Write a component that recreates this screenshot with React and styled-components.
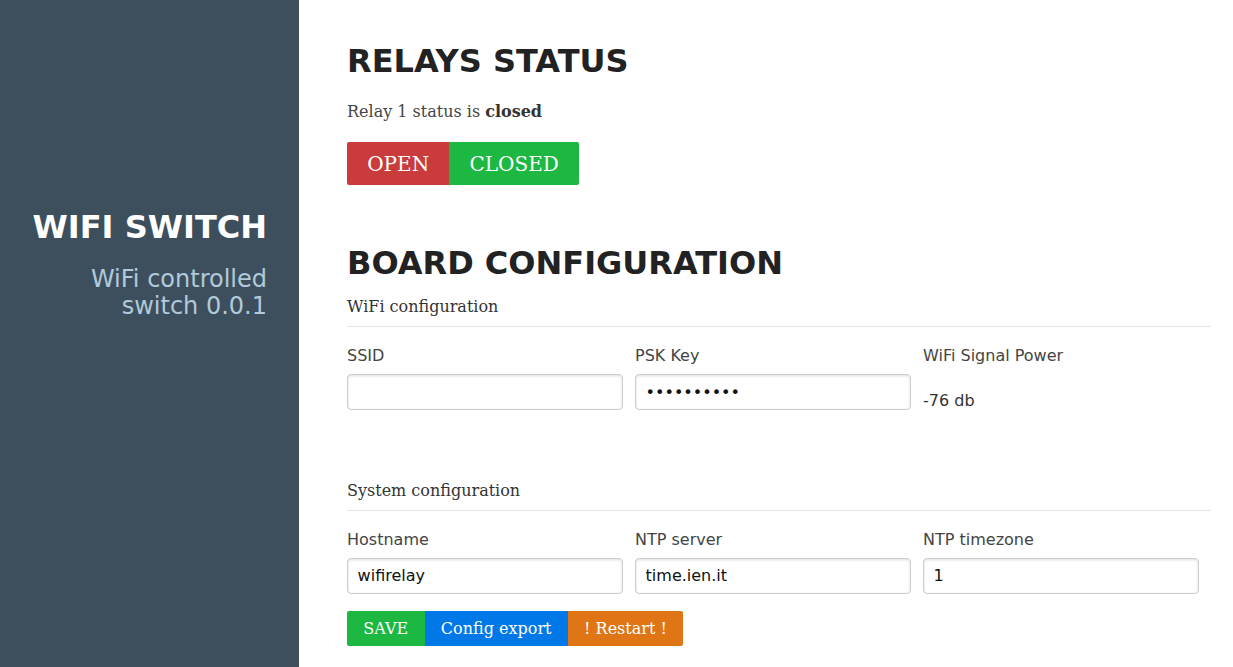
import React from "react";
import styled, { createGlobalStyle } from "styled-components";

const Global = createGlobalStyle`
  html, body { margin: 0; padding: 0; background: #fff; }
  body { font-family: "DejaVu Serif", serif; color: #444; }
  * { box-sizing: border-box; }
`;

const Layout = styled.div`
  display: flex;
  min-height: 667px;
`;

const Sidebar = styled.aside`
  width: 299px;
  flex: 0 0 299px;
  background: #3d4f5d;
  padding: 208px 32px 0 0;
  text-align: right;
  font-family: "DejaVu Sans", sans-serif;
`;

const BrandTitle = styled.h1`
  margin: 0;
  font-size: 32px;
  line-height: 38px;
  font-weight: bold;
  color: #fff;
`;

const BrandTagline = styled.h2`
  margin: 20px 0 0;
  font-size: 24px;
  line-height: 26.5px;
  font-weight: normal;
  color: #b0cadb;
`;

const Content = styled.main`
  flex: 1;
  padding: 42px 22px 0 48px;
`;

const Heading = styled.h1`
  margin: ${(p) => p.$mt || 0}px 0 0;
  font-family: "DejaVu Sans", sans-serif;
  font-size: 32px;
  line-height: 38px;
  font-weight: bold;
  color: #222;
`;

const Para = styled.p`
  margin: 22px 0 0;
  font-size: 16px;
  line-height: 20px;
  color: #444;
  b { color: #333; }
`;

const ButtonGroup = styled.div`
  display: flex;
  margin-top: ${(p) => p.$mt}px;
`;

const Button = styled.button`
  border: none;
  margin: 0;
  font-family: "DejaVu Serif", serif;
  font-size: ${(p) => (p.$large ? 20 : 16)}px;
  line-height: ${(p) => (p.$large ? 23 : 19)}px;
  padding: ${(p) => (p.$large ? "11px 20.2px 9px" : "8.5px 16.3px 7.5px")};
  color: #fff;
  background: ${(p) => p.$bg};
  border-radius: 0;
  cursor: pointer;
  &:first-child { border-radius: 2px 0 0 2px; }
  &:last-child { border-radius: 0 2px 2px 0; }
`;

const Legend = styled.div`
  margin-top: ${(p) => p.$mt}px;
  padding-bottom: 9px;
  border-bottom: 1px solid #e5e5e5;
  font-size: 16px;
  line-height: 20px;
  color: #333;
`;

const Row = styled.div`
  display: grid;
  grid-template-columns: repeat(3, 1fr);
  margin-top: 19px;
  font-family: "DejaVu Sans", sans-serif;
`;

const Field = styled.div`
  display: flex;
  flex-direction: column;
`;

const Label = styled.label`
  font-size: 16px;
  line-height: 20px;
  color: #444;
`;

const Input = styled.input`
  margin-top: 8px;
  width: calc(100% - 12px);
  height: 36px;
  padding: 8px 9.6px;
  font-family: "DejaVu Sans", sans-serif;
  font-size: 16px;
  line-height: 18px;
  color: #111;
  border: 1px solid #ccc;
  border-radius: 4px;
  box-shadow: inset 0 1px 3px #ddd;
  outline: none;
  background: #fff;
`;

const Value = styled.div`
  margin-top: 24.5px;
  font-size: 16px;
  line-height: 20px;
  color: #333;
`;

export default function App() {
  return (
    <>
      <Global />
      <Layout>
        <Sidebar>
          <BrandTitle>WIFI SWITCH</BrandTitle>
          <BrandTagline>
            WiFi controlled
            <br />
            switch 0.0.1
          </BrandTagline>
        </Sidebar>
        <Content>
          <Heading>RELAYS STATUS</Heading>
          <Para>
            Relay 1 status is <b>closed</b>
          </Para>
          <ButtonGroup $mt={20}>
            <Button $large $bg="#ca3c3c">OPEN</Button>
            <Button $large $bg="#1cb841">CLOSED</Button>
          </ButtonGroup>

          <Heading $mt={59}>BOARD CONFIGURATION</Heading>
          <Legend $mt={15}>WiFi configuration</Legend>
          <Row>
            <Field>
              <Label>SSID</Label>
              <Input type="text" defaultValue="" />
            </Field>
            <Field>
              <Label>PSK Key</Label>
              <Input type="password" defaultValue="0123456789" />
            </Field>
            <Field>
              <Label>WiFi Signal Power</Label>
              <Value>-76 db</Value>
            </Field>
          </Row>

          <Legend $mt={70}>System configuration</Legend>
          <Row>
            <Field>
              <Label>Hostname</Label>
              <Input type="text" defaultValue="wifirelay" />
            </Field>
            <Field>
              <Label>NTP server</Label>
              <Input type="text" defaultValue="time.ien.it" />
            </Field>
            <Field>
              <Label>NTP timezone</Label>
              <Input type="text" defaultValue="1" />
            </Field>
          </Row>
          <ButtonGroup $mt={17}>
            <Button $bg="#1cb841">SAVE</Button>
            <Button $bg="#0078e7">Config export</Button>
            <Button $bg="#df7514">! Restart !</Button>
          </ButtonGroup>
        </Content>
      </Layout>
    </>
  );
}
